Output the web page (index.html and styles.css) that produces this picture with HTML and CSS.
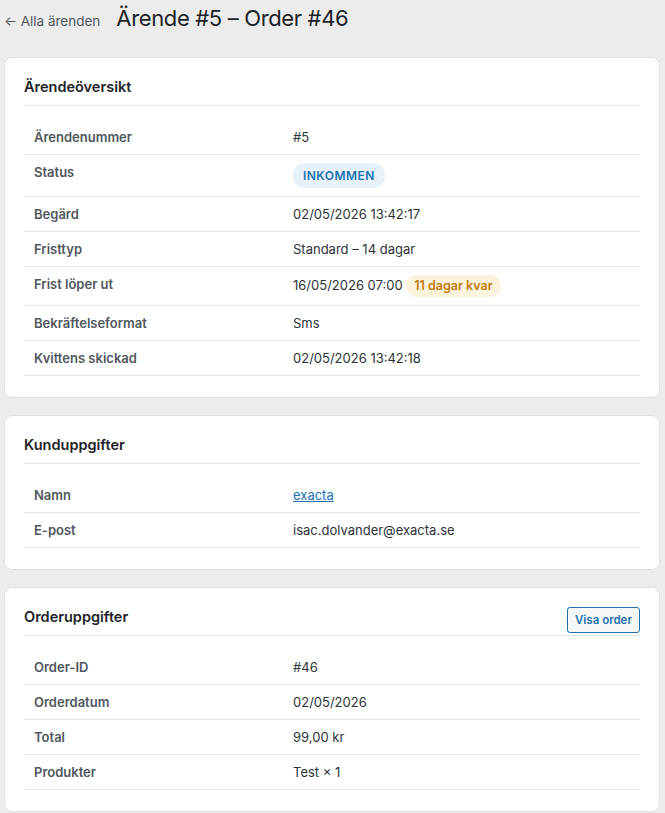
FILE: index.html
```html
<!DOCTYPE html>
<html lang="sv">
<head>
<meta charset="utf-8">
<title>Ärende #5 – Order #46</title>
<link rel="stylesheet" href="styles.css">
</head>
<body>
<div class="wrap">
  <div class="page-head">
    <a class="back" href="#">← Alla ärenden</a>
    <h1 class="page-title">Ärende #5 – Order #46</h1>
  </div>

  <section class="card">
    <div class="card-head">
      <h2 class="card-title">Ärendeöversikt</h2>
    </div>
    <table class="info">
      <tr><th>Ärendenummer</th><td>#5</td></tr>
      <tr><th>Status</th><td><span class="badge badge-status">INKOMMEN</span></td></tr>
      <tr><th>Begärd</th><td>02/05/2026 13:42:17</td></tr>
      <tr><th>Fristtyp</th><td>Standard – 14 dagar</td></tr>
      <tr><th>Frist löper ut</th><td>16/05/2026 07:00 <span class="badge badge-due">11 dagar kvar</span></td></tr>
      <tr><th>Bekräftelseformat</th><td>Sms</td></tr>
      <tr><th>Kvittens skickad</th><td>02/05/2026 13:42:18</td></tr>
    </table>
  </section>

  <section class="card">
    <div class="card-head">
      <h2 class="card-title">Kunduppgifter</h2>
    </div>
    <table class="info">
      <tr><th>Namn</th><td><a class="link" href="#">exacta</a></td></tr>
      <tr><th>E-post</th><td>isac.dolvander@exacta.se</td></tr>
    </table>
  </section>

  <section class="card">
    <div class="card-head">
      <h2 class="card-title">Orderuppgifter</h2>
      <a class="btn" href="#">Visa order</a>
    </div>
    <table class="info">
      <tr><th>Order-ID</th><td>#46</td></tr>
      <tr><th>Orderdatum</th><td>02/05/2026</td></tr>
      <tr><th>Total</th><td>99,00 kr</td></tr>
      <tr><th>Produkter</th><td>Test × 1</td></tr>
    </table>
  </section>
</div>
</body>
</html>
```

FILE: styles.css
```css
* { box-sizing: border-box; }

html, body {
  margin: 0;
  padding: 0;
  background: #ececec;
}

body {
  font-family: Inter, "Noto Sans", "DejaVu Sans", sans-serif;
  font-size: 13px;
  color: #2c3338;
}

.wrap {
  width: 656px;
  margin-left: 4px;
}

.page-head {
  display: flex;
  align-items: baseline;
  gap: 16px;
  height: 57px;
  padding-top: 4px;
}

.back {
  font-size: 13.5px;
  color: #50575e;
  text-decoration: none;
}

.page-title {
  margin: 0;
  font-size: 22px;
  font-weight: 400;
  letter-spacing: -0.35px;
  line-height: 28px;
  color: #1d2327;
}

.card {
  background: #fff;
  border: 1px solid #e0e0e0;
  border-radius: 8px;
  padding: 19px 19px 21px;
  margin-bottom: 17px;
}

.card-head {
  display: flex;
  justify-content: space-between;
  align-items: flex-start;
  height: 29px;
  border-bottom: 1px solid #e6e6e6;
}

.card-title {
  margin: 0;
  font-size: 14.5px;
  font-weight: 600;
  line-height: 20px;
  color: #1d2327;
}

.btn {
  display: inline-block;
  height: 26px;
  padding: 0 7px;
  border: 1px solid #2271b1;
  border-radius: 3px;
  background: #f6f7f7;
  color: #2271b1;
  font-size: 11.5px;
  font-weight: 600;
  line-height: 24px;
  text-decoration: none;
}

.info {
  width: 100%;
  border-collapse: collapse;
  margin-top: 14px;
}

.info th,
.info td {
  padding: 8px 10px;
  border-bottom: 1px solid #e6e6e6;
  text-align: left;
  vertical-align: top;
  line-height: 18px;
}

.info th {
  width: 259px;
  font-weight: 600;
  color: #50575e;
}

.info td {
  color: #2c3338;
}

.badge {
  display: inline-block;
  font-weight: 600;
  border-radius: 12px;
}

.badge-status {
  font-size: 12px;
  padding: 4px 10px;
  line-height: 17px;
  background: #e6f1fa;
  color: #2271b1;
  letter-spacing: 0.45px;
}

.badge-due {
  font-size: 12.5px;
  padding: 2px 8px;
  line-height: 18px;
  background: #fcf3dc;
  color: #c27b0b;
}

.link {
  color: #2271b1;
  text-decoration: underline;
}
```
